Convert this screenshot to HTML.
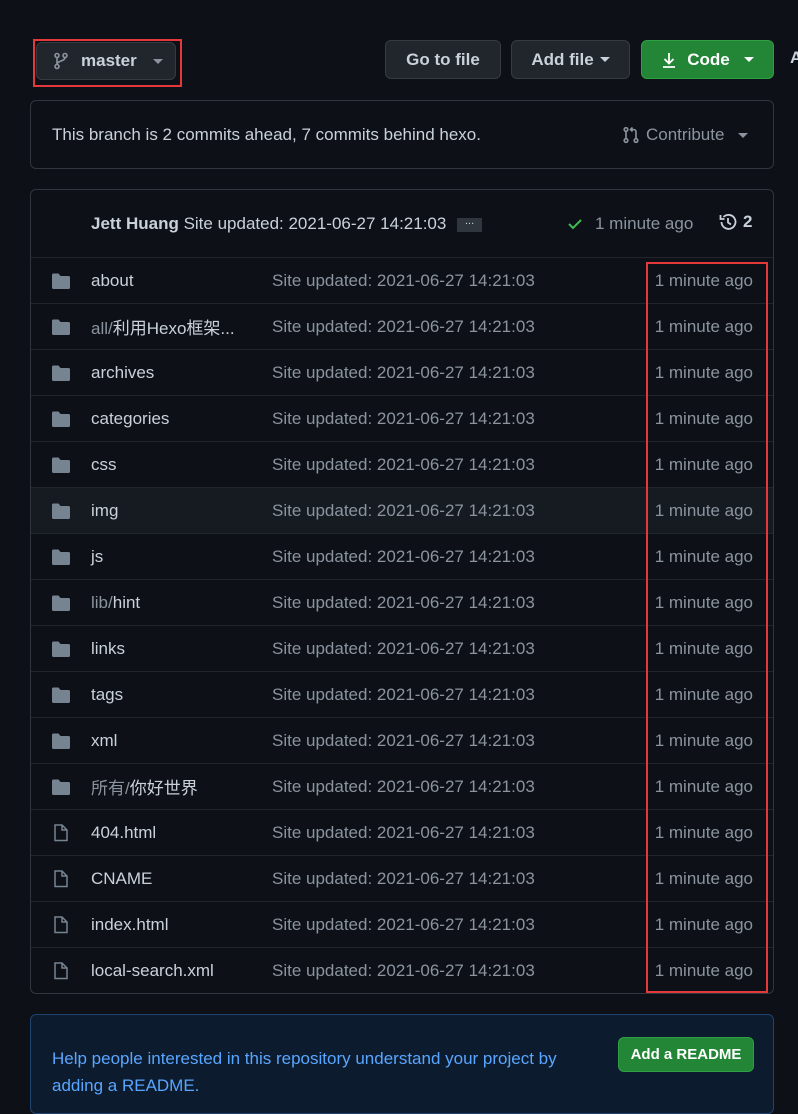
<!DOCTYPE html>
<html><head><meta charset="utf-8"><style>
*{box-sizing:border-box;margin:0;padding:0}
body{width:798px;height:1098px;overflow:hidden;background:#0d1117;font-family:"Liberation Sans","Noto Sans CJK SC",sans-serif;color:#c9d1d9;font-size:17px;position:relative}
.abs{position:absolute}
.btn{position:absolute;background:#21262d;border:1px solid #363b42;border-radius:6px;color:#c9d1d9;font-weight:bold;font-size:17px;display:flex;align-items:center;justify-content:center;gap:6px}
.caret{display:inline-block;width:0;height:0;border-left:5px solid transparent;border-right:5px solid transparent;border-top:5px solid currentColor;margin-left:4px}
.box{position:absolute;left:30px;width:744px;border:1px solid #30363d;border-radius:6px}
.row{position:absolute;left:0;width:742px;height:46px;border-top:1px solid #21262d;display:flex;align-items:center}
.row .ic{position:absolute;left:20px;top:14px}
.row .nm{position:absolute;left:60px;color:#c9d1d9}
.row .nm span{color:#8b949e}
.row .ms{position:absolute;left:241px;color:#8b949e}
.row .tm{position:absolute;right:20px;color:#8b949e}
</style></head><body>
<div class="btn" style="left:36px;top:42px;width:140px;height:38px;justify-content:flex-start;padding-left:16px;gap:12px">
<svg width="16" height="18" viewBox="0 0 16 18" fill="none" stroke="#8b949e" stroke-width="1.6"><circle cx="4" cy="3.5" r="2"/><circle cx="4" cy="14.5" r="2"/><circle cx="12" cy="3.5" r="2"/><path d="M4 5.5v7M12 5.5c0 4-8 3-8 7"/></svg>
<span>master</span><span class="caret" style="color:#8b949e"></span></div>
<div class="abs" style="left:33px;top:39px;width:149px;height:48px;border:2px solid #e5383b"></div>
<div class="btn" style="left:385px;top:40px;width:116px;height:39px">Go to file</div>
<div class="btn" style="left:511px;top:40px;width:119px;height:39px">Add file<span class="caret" style="margin-left:0"></span></div>
<div class="btn" style="left:641px;top:40px;width:133px;height:39px;background:#238636;border-color:#2ea043;color:#fff;gap:10px">
<svg width="16" height="18" viewBox="0 0 16 18" fill="none" stroke="#fff" stroke-width="1.8"><path d="M8 2v10M3.5 8l4.5 4.5L12.5 8M2 16h12"/></svg>Code<span class="caret"></span></div>
<div class="abs" style="left:790px;top:48px;width:8px;height:14px;color:#c9d1d9;font-weight:bold">A</div>
<div class="box" style="top:100px;height:69px">
<div class="abs" style="left:21px;top:24px">This branch is 2 commits ahead, 7 commits behind hexo.</div>
<div class="abs" style="left:591px;top:24px;color:#8b949e;display:flex;align-items:center;gap:6px">
<svg width="18" height="18" viewBox="0 0 18 18" fill="none" stroke="#8b949e" stroke-width="1.6"><circle cx="4" cy="3.5" r="1.8"/><circle cx="4" cy="14.5" r="1.8"/><circle cx="14" cy="14.5" r="1.8"/><path d="M4 5.3v7.4M14 12.7V6c0-2-1-2.5-3-2.5H9M10.5 1.5L8.5 3.5l2 2"/></svg>Contribute<span class="caret" style="margin-left:8px"></span></div>
</div>
<div class="box" style="top:189px;height:805px">
<div class="abs" style="left:0;top:0;width:742px;height:67px;background:#0d1117;border-radius:6px 6px 0 0"></div>
<div class="abs" style="left:60px;top:24px"><b>Jett Huang</b> Site updated: 2021-06-27 14:21:03 <span style="display:inline-block;background:#30363d;width:25px;height:14px;font-size:11px;line-height:6px;text-align:center;vertical-align:middle;margin-left:6px;color:#c9d1d9">...</span></div>
<div class="abs" style="left:536px;top:24px;color:#8b949e;display:flex;align-items:center;gap:12px"><svg width="16" height="14" viewBox="0 0 16 14" fill="none" stroke="#3fb950" stroke-width="2"><path d="M2 7l4 4 8-8"/></svg>1 minute ago</div>
<div class="abs" style="left:687px;top:22px;font-weight:bold;display:flex;align-items:center;gap:5px"><svg width="20" height="20" viewBox="0 0 20 20" fill="none" stroke="#c9d1d9" stroke-width="1.8"><path d="M3.5 10a7 7 0 1 0 2-5"/><path d="M2.5 3v4h4M10 6v4.5l3 2"/></svg>2</div>
<div id="rows"></div>
</div>
<div class="abs" style="left:646px;top:262px;width:122px;height:731px;border:2px solid #e5383b"></div>
<div class="box" style="top:1014px;height:100px;background:#0d1b2e;border-color:#1f4470">
<div class="abs" style="left:21px;top:30px;color:#58a6ff;line-height:27px;width:540px">Help people interested in this repository understand your project by adding a README.</div>
<div class="abs" style="left:587px;top:22px;width:136px;height:35px;background:#238636;border:1px solid #2ea043;border-radius:6px;color:#fff;font-weight:bold;font-size:15px;display:flex;align-items:center;justify-content:center">Add a README</div>
</div>
<script>
var d=[["about"],["<span>all/</span>利用Hexo框架..."],["archives"],["categories"],["css"],["img"],["js"],["<span>lib/</span>hint"],["links"],["tags"],["xml"],["<span>所有/</span>你好世界"],["404.html",1],["CNAME",1],["index.html",1],["local-search.xml",1]];
var fold='<svg class="ic" width="20" height="18" viewBox="0 0 20 18"><path d="M1 3a1.5 1.5 0 0 1 1.5-1.5h5l2 2.5h8A1.5 1.5 0 0 1 19 5.5v10A1.5 1.5 0 0 1 17.5 17h-15A1.5 1.5 0 0 1 1 15.5z" fill="#768390"/></svg>';
var file='<svg class="ic" width="20" height="18" viewBox="0 0 20 18" fill="none" stroke="#768390" stroke-width="1.5"><path d="M4 1h7l5 5v10.5H4z M11 1v5h5"/></svg>';
var h='';d.forEach(function(r,i){h+='<div class="row" style="top:'+(67+i*46)+'px;'+(i==5?'background:#161b22':'')+'">'+(r[1]?file:fold)+'<div class="nm">'+r[0]+'</div><div class="ms">Site updated: 2021-06-27 14:21:03</div><div class="tm">1 minute ago</div></div>';});
document.getElementById('rows').innerHTML=h;
</script>
</body></html>
